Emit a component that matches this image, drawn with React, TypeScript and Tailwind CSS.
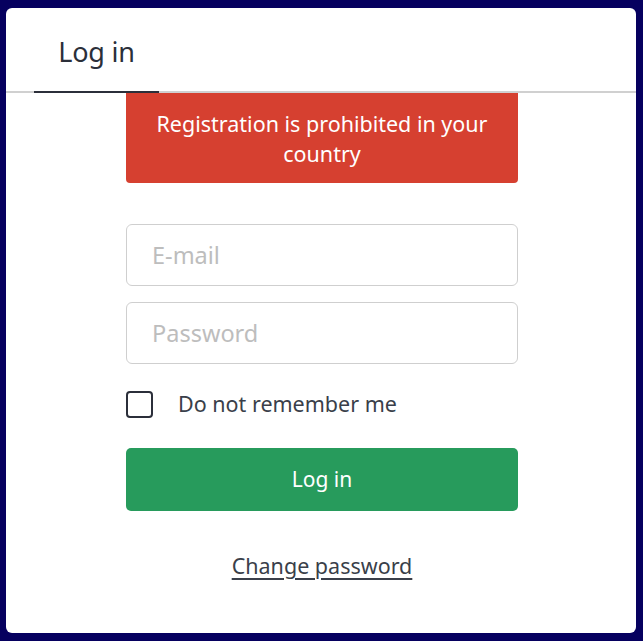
import React from 'react';

export default function App() {
  return (
    <div className="w-[643px] h-[641px] bg-[#06005f] pt-[8px] pl-[6px] pr-[7px] pb-[8px] font-['Noto_Sans',sans-serif]">
      <div className="w-full h-full bg-white rounded-[6px] flex flex-col overflow-hidden">
        {/* Tabs */}
        <div className="h-[85px] flex items-end border-b-[2px] border-[#d0d0d0] pl-[28px]">
          <div className="w-[125px] h-full flex items-center justify-center border-b-[2px] border-[#2b2f3a] -mb-[2px] pt-[4px]">
            <span className="text-[27px] text-[#2b2f3a] tracking-[-0.2px]">Log in</span>
          </div>
        </div>

        <div className="w-[392px] ml-[120px] flex flex-col">
          <div className="h-[90px] bg-[#d64030] rounded-b-[4px] flex items-center justify-center px-[20px] pt-[2px] text-center text-white text-[21.5px] leading-[30px]">
            Registration is prohibited in your country
          </div>

          <input
            placeholder="E-mail"
            className="mt-[41px] h-[62px] w-full border border-[#cfcfcf] rounded-[6px] px-[25px] text-[23.5px] text-[#333] placeholder:text-[#bdbdbd] outline-none"
          />
          <input
            type="password"
            placeholder="Password"
            className="mt-[16px] h-[62px] w-full border border-[#cfcfcf] rounded-[6px] px-[25px] text-[23.5px] text-[#333] placeholder:text-[#bdbdbd] outline-none"
          />

          <label className="mt-[26px] h-[28px] flex items-center gap-[25px] cursor-pointer">
            <span className="w-[27px] h-[27px] border-[2px] border-[#2b2f3a] rounded-[4px] shrink-0" />
            <span className="text-[21.5px] leading-[28px] text-[#3a3f4a]">Do not remember me</span>
          </label>

          <button className="mt-[30px] h-[63px] w-full bg-[#279b5c] rounded-[5px] text-white text-[21px]">
            Log in
          </button>

          <a href="#" className="mt-[40px] self-center text-[21.5px] leading-[30px] text-[#3a3f4a] underline underline-offset-[4px]">
            Change password
          </a>
        </div>
      </div>
    </div>
  );
}
